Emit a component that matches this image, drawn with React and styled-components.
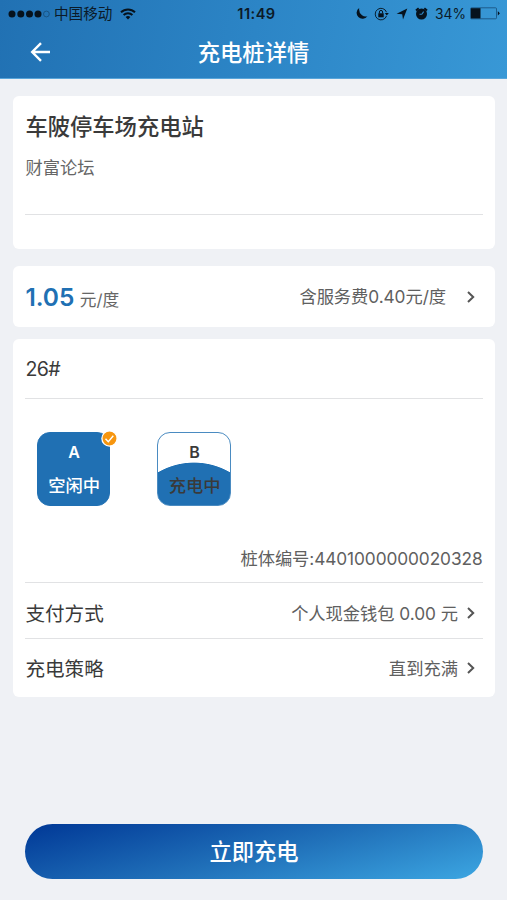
import React from "react";
import styled, { createGlobalStyle } from "styled-components";

const GlobalStyle = createGlobalStyle`
  * { box-sizing: border-box; }
  body {
    margin: 0;
    background: #eff1f5;
    font-family: Inter, "Noto Sans CJK SC", sans-serif;
    color: #3a3a3a;
  }
  svg { display: block; flex: none; }
`;

const Screen = styled.div`
  width: 507px;
  height: 900px;
  display: flex;
  flex-direction: column;
  background: #eff1f5;
  overflow: hidden;
`;

const Header = styled.header`
  height: 79px;
  flex: none;
  background: linear-gradient(100deg, #2171b3 0%, #2c85c6 50%, #3898d6 100%);
  border-bottom: 1px solid #58a5da;
`;

const StatusBar = styled.div`
  height: 27px;
  display: grid;
  grid-template-columns: 1fr auto 1fr;
  align-items: center;
  padding: 0 7px 0 8px;
  color: #0b1a28;
`;

const StatusGroup = styled.div`
  display: flex;
  align-items: center;
  justify-content: ${(p) => (p.$end ? "flex-end" : "flex-start")};
`;

const StatusText = styled.span`
  font-size: ${(p) => p.$size}px;
  font-weight: ${(p) => p.$weight || 400};
  line-height: 20px;
  letter-spacing: ${(p) => p.$track || 0}px;
  margin: ${(p) => p.$margin || 0};
  white-space: nowrap;
`;

const StatusIcon = styled.svg`
  margin-left: ${(p) => p.$gap}px;
`;

const NavBar = styled.nav`
  height: 50px;
  display: grid;
  grid-template-columns: 60px 1fr 60px;
  align-items: center;
  color: #fff;
`;

const BackButton = styled.button`
  border: 0;
  background: none;
  padding: 0 0 2px 29.5px;
  color: inherit;
`;

const PageTitle = styled.h1`
  margin: 0;
  font-size: 22.3px;
  font-weight: 500;
  line-height: 51px;
  text-align: center;
`;

const Content = styled.main`
  flex: 1;
  display: flex;
  flex-direction: column;
  padding: 17px 12px 21px 13px;
`;

const Card = styled.section`
  flex: none;
  height: ${(p) => p.$height}px;
  margin-bottom: ${(p) => p.$gap || 0}px;
  padding: 0 12.5px 0 12.4px;
  border-radius: 6px;
  background: #fff;
`;

const StationInfo = styled.div`
  height: 119px;
  padding-top: 16px;
  border-bottom: 1px solid #e1e2e4;
`;

const StationName = styled.h2`
  margin: 0;
  font-size: 22.3px;
  font-weight: 500;
  line-height: 30px;
`;

const StationPlace = styled.p`
  margin: 14px 0 0;
  font-size: 17.3px;
  line-height: 24px;
  color: #666;
`;

const Row = styled.div`
  display: flex;
  align-items: center;
  justify-content: ${(p) => (p.$end ? "flex-end" : "space-between")};
  height: ${(p) => p.$height}px;
  padding-top: ${(p) => p.$shift || 0}px;
  border-bottom: ${(p) => (p.$line ? "1px solid #e1e2e4" : "0")};
`;

const Label = styled.span`
  font-size: 19.6px;
  line-height: 28px;
  letter-spacing: ${(p) => p.$track || 0}px;
`;

const Value = styled.span`
  display: flex;
  align-items: center;
  font-size: 17.3px;
  line-height: 26px;
  color: #606060;
  letter-spacing: ${(p) => p.$track || 0}px;
  white-space: pre;
`;

const ValueChevron = styled.svg`
  margin: 0 6.5px 1px ${(p) => p.$gap}px;
`;

const Price = styled.div`
  display: flex;
  align-items: baseline;
  padding-top: 3px;
  line-height: 30px;
`;

const PriceAmount = styled.strong`
  font-size: 24.5px;
  font-weight: 600;
  letter-spacing: -0.05px;
  color: #2070b3;
`;

const PriceUnit = styled.span`
  margin-left: 5.5px;
  font-size: 16.7px;
  color: #666;
`;

const Connectors = styled.div`
  display: flex;
  gap: 47px;
  height: 135px;
  padding: 33px 0 0 11.6px;
`;

const Connector = styled.div`
  position: relative;
  width: 73.4px;
  height: 73.5px;
  padding: 7px 0 0 1px;
  border-radius: 13px;
  border: 1px solid ${(p) => (p.$charging ? "#4a8bc1" : "#2070b3")};
  background: ${(p) =>
    p.$charging
      ? "radial-gradient(circle at 50% 101px, #2070b3 71px, #fff 71.8px)"
      : "#2070b3"};
  color: ${(p) => (p.$charging ? "#3a3a3a" : "#fff")};
  text-align: center;
`;

const ConnectorName = styled.div`
  font-size: 16px;
  font-weight: 600;
  line-height: 25px;
`;

const ConnectorState = styled.div`
  margin-top: 8px;
  font-size: 17.3px;
  font-weight: 500;
  line-height: 26px;
`;

const CheckBadge = styled.svg`
  position: absolute;
  top: -3px;
  right: -9px;
`;

const StartButton = styled.button`
  margin: auto 0 0 12px;
  width: 458px;
  height: 55px;
  padding: 0;
  border: 0;
  border-radius: 28px;
  background: linear-gradient(166deg, #023b98 3%, #2070b9 52%, #3ba4e0 98%);
  color: #fff;
  font: 500 22.3px/55px Inter, "Noto Sans CJK SC", sans-serif;
`;

function SignalDots() {
  return (
    <svg width="42" height="10" viewBox="0 0 42 10">
      {[4, 12.8, 21.5, 30].map((x) => (
        <circle key={x} cx={x} cy="5" r="3.5" fill="#06121d" />
      ))}
      <circle cx="38.4" cy="5" r="2.9" fill="none" stroke="#174d78" strokeWidth=".8" />
    </svg>
  );
}

function Wifi() {
  return (
    <StatusIcon $gap={8} width="16" height="12" viewBox="0 0 16 12" fill="none" stroke="#06121d" strokeWidth="2">
      <path d="M1 4.3a10 10 0 0 1 14 0M3.6 7a6.3 6.3 0 0 1 8.8 0" />
      <path d="M5.6 9.1a3.5 3.5 0 0 1 4.8 0L8 11.6z" fill="#06121d" stroke="none" />
    </StatusIcon>
  );
}

function Moon() {
  return (
    <svg width="13" height="13" viewBox="0 0 13 13">
      <path d="M4.2 1A5.9 5.9 0 1 0 12.4 9.2Q9.5 10 7 8.2 3.5 5.5 4.2 1z" fill="#06121d" />
    </svg>
  );
}

function RotationLock() {
  return (
    <StatusIcon $gap={6} width="15" height="14" viewBox="0 0 15 14" fill="none" stroke="#06121d">
      <path d="M12.5 5.2A5.8 5.8 0 1 0 12.5 9" strokeWidth=".9" />
      <path d="M10.8 6h4l-2 2.4z" fill="#06121d" stroke="none" />
      <rect x="4.3" y="6.3" width="5.4" height="4" fill="#06121d" stroke="none" />
      <path d="M5.4 6.5V5a1.6 1.6 0 0 1 3.2 0v1.5" />
    </StatusIcon>
  );
}

function LocationArrow() {
  return (
    <StatusIcon $gap={7} width="12" height="12" viewBox="0 0 12 12">
      <path d="M11.3.5 7 11.5 6.2 6.2.6 5.8z" fill="#06121d" />
    </StatusIcon>
  );
}

function Alarm() {
  return (
    <StatusIcon $gap={7} width="13" height="13" viewBox="0 0 13 13">
      <circle cx="6.5" cy="7" r="5.5" fill="#06121d" />
      <path d="M1 3.6 3.7 1.2M12 3.6 9.3 1.2" stroke="#06121d" strokeWidth="2" />
      <path d="M6.9 7.3 8.6 4.6M6.9 7.3H4.5" stroke="#3189c8" strokeWidth="1.1" fill="none" />
    </StatusIcon>
  );
}

function Battery() {
  return (
    <StatusIcon $gap={4} width="30" height="13" viewBox="0 0 30 13">
      <rect x=".5" y=".8" width="26" height="11" rx="1" fill="none" stroke="#174d78" strokeWidth=".8" />
      <rect x="1" y="1.2" width="9.5" height="10.2" fill="#06121d" />
      <path d="M27.8 4.3q3.4 2 0 4.2z" fill="#06121d" />
    </StatusIcon>
  );
}

function Chevron({ gap }) {
  return (
    <ValueChevron $gap={gap} width="10" height="14" viewBox="0 0 10 14" fill="none" stroke="#555" strokeWidth="2">
      <path d="m2 2 5.2 5L2 12" />
    </ValueChevron>
  );
}

export default function App() {
  return (
    <>
      <GlobalStyle />
      <Screen>
        <Header>
          <StatusBar>
            <StatusGroup>
              <SignalDots />
              <StatusText $size={14.6} $margin="0 0 0 4px">中国移动</StatusText>
              <Wifi />
            </StatusGroup>
            <StatusText $size={14.6} $weight={600} $track={0.45} $margin="0 0 0 5px">11:49</StatusText>
            <StatusGroup $end>
              <Moon />
              <RotationLock />
              <LocationArrow />
              <Alarm />
              <StatusText $size={13.8} $margin="0 0 0 7.5px">34%</StatusText>
              <Battery />
            </StatusGroup>
          </StatusBar>
          <NavBar>
            <BackButton aria-label="返回">
              <svg width="21" height="20" viewBox="0 0 21 20" fill="none" stroke="currentColor" strokeWidth="2.4">
                <path d="M20 10H2.2M11 1.2 2.2 10l8.8 8.8" />
              </svg>
            </BackButton>
            <PageTitle>充电桩详情</PageTitle>
          </NavBar>
        </Header>

        <Content>
          <Card $height={153} $gap={17}>
            <StationInfo>
              <StationName>车陂停车场充电站</StationName>
              <StationPlace>财富论坛</StationPlace>
            </StationInfo>
          </Card>

          <Card $height={61} $gap={12}>
            <Row $height={61} $shift={1}>
              <Price>
                <PriceAmount>1.05</PriceAmount>
                <PriceUnit>元/度</PriceUnit>
              </Price>
              <Value $track={-0.08}>含服务费0.40元/度<Chevron gap={20} /></Value>
            </Row>
          </Card>

          <Card $height={358}>
            <Row $height={60} $line>
              <Label $track={-0.6}>26#</Label>
            </Row>
            <Connectors>
              <Connector>
                <ConnectorName>A</ConnectorName>
                <ConnectorState>空闲中</ConnectorState>
                <CheckBadge width="17" height="17" viewBox="0 0 17 17">
                  <circle cx="8.5" cy="8.5" r="7.6" fill="#f7960f" stroke="#fff" strokeWidth="1.3" />
                  <path d="m4.5 8.7 2.8 3 5-6" fill="none" stroke="#fff" strokeWidth="1.4" />
                </CheckBadge>
              </Connector>
              <Connector $charging>
                <ConnectorName>B</ConnectorName>
                <ConnectorState>充电中</ConnectorState>
              </Connector>
            </Connectors>
            <Row $height={49} $shift={1} $line $end>
              <Value $track={-0.1}>桩体编号:4401000000020328</Value>
            </Row>
            <Row $height={56} $shift={6} $line>
              <Label>支付方式</Label>
              <Value $track={-0.05}>个人现金钱包 0.00 元<Chevron gap={8} /></Value>
            </Row>
            <Row $height={58} $shift={1}>
              <Label>充电策略</Label>
              <Value>直到充满<Chevron gap={8} /></Value>
            </Row>
          </Card>

          <StartButton>立即充电</StartButton>
        </Content>
      </Screen>
    </>
  );
}
